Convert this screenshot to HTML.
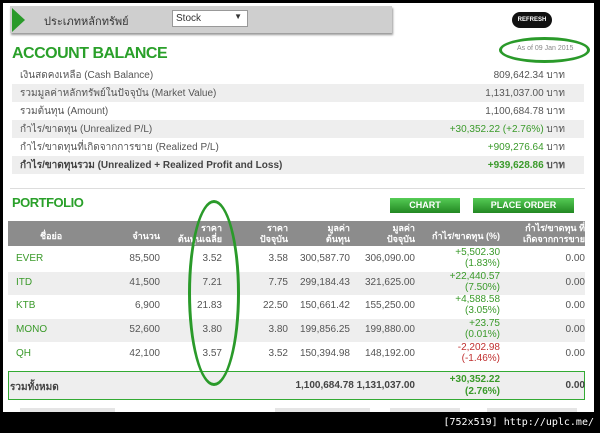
<!DOCTYPE html>
<html><head><meta charset="utf-8"><style>
*{margin:0;padding:0;box-sizing:border-box}
body{width:600px;height:433px;background:#000;position:relative;overflow:hidden;font-family:"Liberation Sans","Noto Sans CJK SC",sans-serif;font-size:10px;color:#555}
.a{position:absolute;white-space:nowrap}
.g{color:#3a9a2a}
.r{color:#c03030}
</style></head><body>
<div class="a" style="left:3px;top:3px;width:591px;height:409px;background:#fff"></div>
<div class="a" style="left:10px;top:6px;width:382px;height:27px;background:#cfcfcf;box-shadow:1px 2px 2px #999"></div>
<div class="a" style="left:12px;top:8px;width:0;height:0;border-top:12px solid transparent;border-bottom:12px solid transparent;border-left:13px solid #2a9a2a"></div>
<div class="a" style="left:44px;top:12px;font-size:11px;color:#333">ประเภทหลักทรัพย์</div>
<div class="a" style="left:172px;top:10px;width:76px;height:17px;background:#fff;border:1px solid #999;font-size:10px;padding:2px 3px;color:#333">Stock<span style="position:absolute;right:5px;top:1px;font-size:8px">▼</span></div>
<div class="a" style="left:512px;top:12px;width:40px;height:16px;background:#111;border-radius:8px;color:#fff;font-size:6px;font-weight:bold;text-align:center;line-height:16px">REFRESH</div>
<div class="a g" style="left:12px;top:45px;font-size:16px;font-weight:bold;color:#2aa02a;letter-spacing:-0.5px">ACCOUNT BALANCE</div>
<div class="a" style="left:517px;top:45px;font-size:7px;color:#888">As of 09 Jan 2015</div>
<div class="a" style="left:499px;top:37px;width:91px;height:26px;border:3px solid #2a9a2a;border-radius:50%"></div>
<div class="a" style="left:12px;top:84px;width:572px;height:18px;background:#eee"></div>
<div class="a" style="left:12px;top:120px;width:572px;height:18px;background:#eee"></div>
<div class="a" style="left:12px;top:156px;width:572px;height:18px;background:#eee"></div>
<div class="a" style="left:20px;top:68px">เงินสดคงเหลือ (Cash Balance)</div>
<div class="a" style="left:20px;top:86px">รวมมูลค่าหลักทรัพย์ในปัจจุบัน (Market Value)</div>
<div class="a" style="left:20px;top:104px">รวมต้นทุน (Amount)</div>
<div class="a" style="left:20px;top:122px">กำไร/ขาดทุน (Unrealized P/L)</div>
<div class="a" style="left:20px;top:140px">กำไร/ขาดทุนที่เกิดจากการขาย (Realized P/L)</div>
<div class="a" style="left:20px;top:158px;font-weight:bold;color:#444">กำไร/ขาดทุนรวม (Unrealized + Realized Profit and Loss)</div>
<div class="a" style="right:35px;top:68px;text-align:right">809,642.34 บาท</div>
<div class="a" style="right:35px;top:86px">1,131,037.00 บาท</div>
<div class="a" style="right:35px;top:104px">1,100,684.78 บาท</div>
<div class="a" style="right:35px;top:122px"><span class="g">+30,352.22 (+2.76%)</span> บาท</div>
<div class="a" style="right:35px;top:140px"><span class="g">+909,276.64</span> บาท</div>
<div class="a" style="right:35px;top:158px;font-weight:bold"><span class="g">+939,628.86</span> บาท</div>
<div class="a" style="left:10px;top:188px;width:575px;height:1px;background:#ddd"></div>
<div class="a" style="left:12px;top:195px;font-size:13px;font-weight:bold;color:#2aa02a;letter-spacing:-0.5px">PORTFOLIO</div>
<div class="a" style="left:390px;top:198px;width:70px;height:15px;background:linear-gradient(#5c5,#282);color:#fff;font-size:9px;font-weight:bold;text-align:center;line-height:15px">CHART</div>
<div class="a" style="left:473px;top:198px;width:101px;height:15px;background:linear-gradient(#5c5,#282);color:#fff;font-size:9px;font-weight:bold;text-align:center;line-height:15px">PLACE ORDER</div>
<div class="a" style="left:8px;top:221px;width:577px;height:25px;background:#8c8c8c"></div>
<div style="color:#fff;font-weight:bold;font-size:9px">
<div class="a" style="left:40px;top:229px">ชื่อย่อ</div>
<div class="a" style="right:440px;top:229px">จำนวน</div>
<div class="a" style="right:378px;top:223px;text-align:right;line-height:11px">ราคา<br>ต้นทุนเฉลี่ย</div>
<div class="a" style="right:312px;top:223px;text-align:right;line-height:11px">ราคา<br>ปัจจุบัน</div>
<div class="a" style="right:250px;top:223px;text-align:right;line-height:11px">มูลค่า<br>ต้นทุน</div>
<div class="a" style="right:185px;top:223px;text-align:right;line-height:11px">มูลค่า<br>ปัจจุบัน</div>
<div class="a" style="right:100px;top:229px">กำไร/ขาดทุน (%)</div>
<div class="a" style="right:15px;top:223px;text-align:right;line-height:11px">กำไร/ขาดทุน ที่<br>เกิดจากการขาย</div>
</div>
<div class="a" style="left:8px;top:272px;width:577px;height:23px;background:#eee"></div>
<div class="a" style="left:8px;top:319px;width:577px;height:23px;background:#eee"></div>
<div id="rows"></div>
<div class="a" style="left:8px;top:371px;width:577px;height:29px;background:#eee;border:1px solid #3a3"></div>
<div class="a" style="left:10px;top:380px;font-weight:bold;color:#444">รวมทั้งหมด</div>
<div class="a" style="right:185px;top:380px;font-weight:bold;color:#444">1,100,684.78 1,131,037.00</div>
<div class="a g" style="right:100px;top:374px;font-weight:bold;text-align:right;line-height:12px">+30,352.22<br>(2.76%)</div>
<div class="a" style="right:15px;top:380px;font-weight:bold;color:#444">0.00</div>
<script>
var d=[["EVER","85,500","3.52","3.58","300,587.70","306,090.00","+5,502.30","(1.83%)"],["ITD","41,500","7.21","7.75","299,184.43","321,625.00","+22,440.57","(7.50%)"],["KTB","6,900","21.83","22.50","150,661.42","155,250.00","+4,588.58","(3.05%)"],["MONO","52,600","3.80","3.80","199,856.25","199,880.00","+23.75","(0.01%)"],["QH","42,100","3.57","3.52","150,394.98","148,192.00","-2,202.98","(-1.46%)"]];
var h="";d.forEach(function(r,i){var y=253+i*23.7;var c=r[6][0]=="-"?"r":"g";
h+='<div class="a g" style="left:16px;top:'+y+'px">'+r[0]+'</div>';
[[r[1],440],[r[2],378],[r[3],312],[r[4],250],[r[5],185],["0.00",15]].forEach(function(v){h+='<div class="a" style="right:'+v[1]+'px;top:'+y+'px">'+v[0]+'</div>'});
h+='<div class="a '+c+'" style="right:100px;top:'+(y-6)+'px;text-align:right;line-height:11px">'+r[6]+'<br>'+r[7]+'</div>';});
document.getElementById("rows").innerHTML=h;
</script>
<div class="a" style="left:188px;top:200px;width:52px;height:186px;border:3px solid #2a9a2a;border-radius:50%"></div>
<div class="a" style="left:20px;top:408px;width:95px;height:4px;background:#e5e5e5"></div>
<div class="a" style="left:275px;top:408px;width:95px;height:4px;background:#e5e5e5"></div>
<div class="a" style="left:390px;top:408px;width:70px;height:4px;background:#e5e5e5"></div>
<div class="a" style="left:487px;top:408px;width:90px;height:4px;background:#e5e5e5"></div>
<div class="a" style="right:6px;top:417px;color:#fff;font-family:'DejaVu Sans Mono',monospace;font-size:10px">[752x519] http://uplc.me/</div>
</body></html>
